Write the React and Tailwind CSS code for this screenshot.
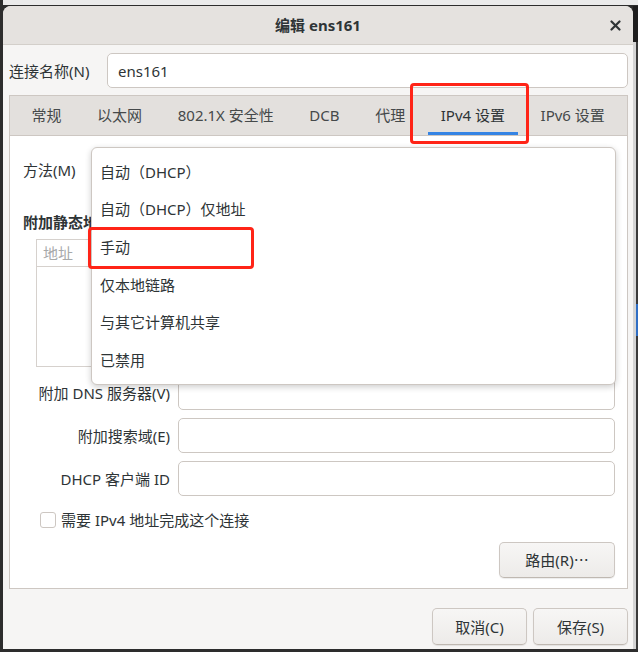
const tabs = ['常规', '以太网', '802.1X 安全性', 'DCB', '代理', 'IPv4 设置', 'IPv6 设置'];
const methods = ['自动（DHCP）', '自动（DHCP）仅地址', '手动', '仅本地链路', '与其它计算机共享', '已禁用'];

function Entry({ className = '' }) {
  return (
    <div className={`h-[35px] rounded-[5px] border border-[#cdc7c2] bg-white ${className}`} />
  );
}

function Button({ children, className = '' }) {
  return (
    <button className={`flex items-center justify-center rounded-[5px] border border-[#cdc7c2] border-b-[#bfb8b1] bg-gradient-to-b from-[#f7f6f5] to-[#edebe9] text-[#2e3436] shadow-[0_1px_1px_rgba(0,0,0,0.08)] ${className}`}>
      {children}
    </button>
  );
}

function FormRow({ label }) {
  return (
    <div className="flex items-center gap-[8px]">
      <span className="w-[147px] shrink-0 text-right">{label}</span>
      <Entry className="flex-1" />
    </div>
  );
}

export default function App() {
  return (
    <div className="relative flex h-[652px] w-[638px] flex-col overflow-hidden bg-[#2d2d2d] font-[family-name:'Noto_Sans','Noto_Sans_CJK_SC',sans-serif] text-[15px] leading-[20px] text-[#2e3436]">
      <div className="ml-[3px] h-[5px] shrink-0 bg-[#ebebeb]" />
      <div className="mt-[1px] flex">
        <div className="w-[3px] shrink-0" />

        {/* dialog */}
        <div className="flex h-[643px] w-[630px] shrink-0 flex-col overflow-hidden rounded-t-[8px] bg-[#f6f5f4]">
          <div className="grid h-[39px] shrink-0 grid-cols-[1fr_auto_1fr] items-center border-b border-[#d3cfca] bg-[#e5e2df]">
            <div />
            <span className="font-bold">编辑 ens161</span>
            <div className="flex justify-end pr-[6px]">
              <span className="flex h-[24px] w-[24px] items-center justify-center">
                <svg width="11" height="11" viewBox="0 0 11 11">
                  <path d="M1.5 1.5 L9.5 9.5 M9.5 1.5 L1.5 9.5" stroke="#2e3436" strokeWidth="2.2" strokeLinecap="round" />
                </svg>
              </span>
            </div>
          </div>

          <div className="flex flex-1 flex-col pl-[6px] pr-[5px] pt-[8px] pb-[5px]">
            <div className="flex items-center">
              <span className="w-[98px] shrink-0">连接名称(N)</span>
              <div className="flex h-[35px] flex-1 items-center rounded-[5px] border border-[#cdc7c2] bg-white pl-[10px]">
                ens161
              </div>
            </div>

            {/* notebook */}
            <div className="mt-[7px] flex h-[494px] flex-col border border-[#cdc7c2] bg-white">
              <div className="flex h-[40px] shrink-0 gap-[9.6px] border-b border-[#cdc7c2] bg-[#e3e0dd] pl-[8.5px]">
                {tabs.map((t, i) => (
                  <div
                    key={t}
                    className={`flex items-center px-[13px] pt-[2px] ${
                      i === 5 ? 'border-b-[3px] border-[#3584e4] pb-0 text-[#2e3436]' : 'pb-[3px] text-[#45494a]'
                    }`}
                  >
                    {t}
                  </div>
                ))}
              </div>

              <div className="flex flex-1 flex-col pl-[13px] pr-[12px] pt-[11px]">
                <div className="flex h-[46px] items-center gap-[10px]">
                  <span>方法(M)</span>
                  <Entry className="ml-[8px] flex-1" />
                </div>

                <div className="mt-[19px] font-bold">附加静态地址</div>

                <div className="ml-[13px] mt-[7px] flex h-[128px] flex-col border border-[#d6d1cd]">
                  <div className="flex h-[27px] items-center border-b border-[#d6d1cd] pl-[6px] text-[#a7a9aa]">
                    地址
                  </div>
                </div>

                <div className="mt-[8px] flex flex-col gap-[8px]">
                  <FormRow label="附加 DNS 服务器(V)" />
                  <FormRow label="附加搜索域(E)" />
                  <FormRow label="DHCP 客户端 ID" />
                </div>

                <div className="mt-[14px] flex items-center gap-[5px] pl-[17px]">
                  <span className="h-[16px] w-[16px] rounded-[3px] border border-[#cdc7c2] bg-white" />
                  <span>需要 IPv4 地址完成这个连接</span>
                </div>

                <div className="mt-[12px] flex justify-end">
                  <Button className="h-[36px] w-[116px]">
                    路由(R)<span className="font-[family-name:'Noto_Sans_CJK_SC',sans-serif]">⋯</span>
                  </Button>
                </div>
              </div>
            </div>

            <div className="mt-[19px] flex justify-end gap-[6px]">
              <Button className="h-[37px] w-[95px]">取消(C)</Button>
              <Button className="h-[37px] w-[95px]">保存(S)</Button>
            </div>
          </div>
        </div>

        {/* background window edge */}
        <div className="flex w-[5px] shrink-0 flex-col">
          <div className="h-[36px] bg-[#1e1e1e]" />
          <div className="flex flex-1">
            <div className="w-[3px] bg-[#d4d4d4]" />
            <div className="flex w-[2px] flex-col bg-[#3a3a3a]">
              <div className="h-[262px]" />
              <div className="h-[32px] bg-[#2f6ec4]" />
            </div>
          </div>
        </div>
      </div>

      {/* method combo popup */}
      <div className="absolute left-[91px] top-[147px] flex w-[525px] flex-col rounded-[6px] border border-[#cdc7c2] bg-white py-[5px] shadow-[0_2px_6px_rgba(0,0,0,0.2)]">
        {methods.map((m) => (
          <div key={m} className="flex h-[37.6px] items-center pl-[8px]">
            {m}
          </div>
        ))}
      </div>

      {/* annotation boxes */}
      <div className="pointer-events-none absolute left-[410px] top-[83px] h-[61px] w-[119px] rounded-[4px] border-[3px] border-[#ff2417]" />
      <div className="pointer-events-none absolute left-[88px] top-[227px] h-[42px] w-[166px] rounded-[4px] border-[3px] border-[#ff2417]" />
    </div>
  );
}
